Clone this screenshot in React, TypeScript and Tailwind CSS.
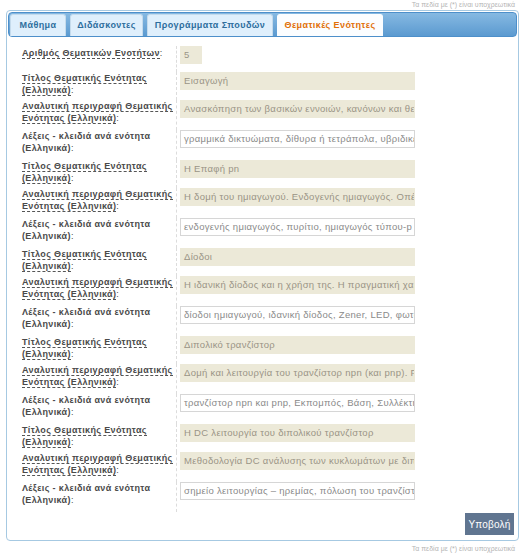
const TABS = [
  { name: 'Μάθημα', w: 'w-[56px]' },
  { name: 'Διδάσκοντες', w: 'w-[73px]' },
  { name: 'Προγράμματα Σπουδών', w: 'w-[126px]' },
  { name: 'Θεματικές Ενότητες', w: 'w-[106px]' },
]

type Row = { label: string; value: string; kind: 'title' | 'desc' | 'keys' }

const UNITS = [
  {
    title: 'Εισαγωγή',
    desc: 'Ανασκόπηση των βασικών εννοιών, κανόνων και θεωρημάτων',
    keys: 'γραμμικά δικτυώματα, δίθυρα ή τετράπολα, υβριδικές παράμετροι',
  },
  {
    title: 'Η Επαφή pn',
    desc: 'Η δομή του ημιαγωγού. Ενδογενής ημιαγωγός. Οπές και ηλεκτρόνια',
    keys: 'ενδογενής ημιαγωγός, πυρίτιο, ημιαγωγός τύπου-p και τύπου-n',
  },
  {
    title: 'Δίοδοι',
    desc: 'Η ιδανική δίοδος και η χρήση της. Η πραγματική χαρακτηριστική',
    keys: 'δίοδοι ημιαγωγού, ιδανική δίοδος, Zener, LED, φωτοδίοδοι',
  },
  {
    title: 'Διπολικό τρανζίστορ',
    desc: 'Δομή και λειτουργία του τρανζίστορ npn (και pnp). Ρεύματα',
    keys: 'τρανζίστορ npn και pnp, Εκπομπός, Βάση, Συλλέκτης, ενίσχυση',
  },
  {
    title: 'Η DC λειτουργία του διπολικού τρανζίστορ',
    desc: 'Μεθοδολογία DC ανάλυσης των κυκλωμάτων με διπολικά τρανζίστορ',
    keys: 'σημείο λειτουργίας – ηρεμίας, πόλωση του τρανζίστορ, ζώνες',
  },
]

const rows: Row[] = UNITS.flatMap((u) => [
  { label: 'Τίτλος Θεματικής Ενότητας (Ελληνικά)', value: u.title, kind: 'title' as const },
  { label: 'Αναλυτική περιγραφή Θεματικής Ενότητας (Ελληνικά)', value: u.desc, kind: 'desc' as const },
  { label: 'Λέξεις - κλειδιά ανά ενότητα (Ελληνικά)', value: u.keys, kind: 'keys' as const },
])

const font = { fontFamily: '"Liberation Sans", Arial, sans-serif' }

function cn(...c: (string | false | undefined)[]) {
  return c.filter(Boolean).join(' ')
}

function Note() {
  return (
    <p className="text-right text-[7px] leading-[10px] text-[#b4b4b4] pr-[13px]" style={font}>
      Τα πεδία με (*) είναι υποχρεωτικά
    </p>
  )
}

function FormRow({ row }: { row: Row }) {
  const h = row.kind === 'title' ? 'h-[28px]' : 'h-[30px]'
  const underline = row.kind !== 'keys'
  const input =
    row.kind === 'keys'
      ? 'bg-white border border-[#d6d6d6] text-[#8a8a8a]'
      : 'bg-[#ece9d8] border border-[#ece9d8] text-[#9a9486]'
  return (
    <div className={cn('flex', h)}>
      <div className="w-[154px] shrink-0 pt-[1px] text-[9px] leading-[11.5px] text-[#4a4a4a]" style={font}>
        <span className={cn('font-bold tracking-[0.36px]', underline && 'border-b border-dashed border-[#555]')}>
          {row.label}
        </span>
        :
      </div>
      <div className="flex-1 border-l border-dashed border-[#dcdcdc] pl-[3px]">
        <div
          className={cn(
            'w-[235px] h-[18px] px-[3px] overflow-hidden whitespace-nowrap text-[9.5px] tracking-[0.3px] leading-[16px]',
            input,
          )}
          style={font}
        >
          {row.value}
        </div>
      </div>
    </div>
  )
}

export default function App() {
  return (
    <div className="w-[528px] h-[557px] bg-white overflow-hidden">
      <Note />
      <div className="mx-[6px] w-[513px] h-[531px] border border-[#a6c9e2] rounded-[4px] bg-white p-[1px] flex flex-col">
        <div className="h-[25px] shrink-0 rounded-[4px] border border-[#4d8fca] bg-gradient-to-b from-[#86b9e2] to-[#5b9ad0] flex items-end gap-[4px] pl-[1px]">
          {TABS.map((t, i) => (
            <div
              key={t.name}
              className={cn(
                'h-[22px] flex items-center justify-center text-[9px] font-bold tracking-[0.4px] rounded-t-[3px] border border-b-0',
                t.w,
                i === 3
                  ? 'bg-[#fbfdff] border-[#fbfdff] text-[#e17009]'
                  : 'bg-[#dfeffc] border-[#c5dbec] text-[#2e6e9e]',
              )}
              style={font}
            >
              {t.name}
            </div>
          ))}
        </div>
        <div className="pl-[14px] pt-[9px]">
          <div className="flex h-[26px]">
            <div className="w-[154px] shrink-0 pt-[2px] text-[9px] leading-[11px] text-[#4a4a4a]" style={font}>
              <span className="font-bold tracking-[0.36px] border-b border-dashed border-[#555]">
                Αριθμός Θεματικών Ενοτήτων
              </span>
              :
            </div>
            <div className="flex-1 border-l border-dashed border-[#dcdcdc] pl-[3px]">
              <div
                className="w-[22px] h-[18px] px-[4px] bg-[#ece9d8] text-[#9a9486] text-[9.5px] leading-[18px]"
                style={font}
              >
                5
              </div>
            </div>
          </div>
          {rows.map((r, i) => (
            <FormRow key={i} row={r} />
          ))}
        </div>
        <div className="flex justify-end pr-[3px] pt-[1px]">
          <button className="w-[49px] h-[22px] bg-[#607590] text-white text-[10px] tracking-[0.2px]" style={font}>
            Υποβολή
          </button>
        </div>
      </div>
      <div className="pt-[3px]">
        <Note />
      </div>
    </div>
  )
}
